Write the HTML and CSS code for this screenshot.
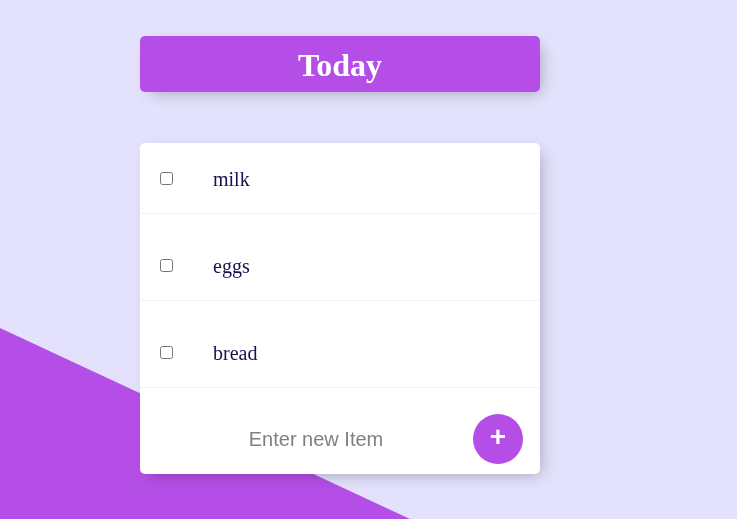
FILE: index.html
```
<!DOCTYPE html>
<html>
<head>
<meta charset="utf-8">
<link rel="stylesheet" href="styles.css">
</head>
<body>
<div class="bg-shape"></div>
<div class="page">
  <div class="box heading">
    <h1>Today</h1>
  </div>
  <div class="box list">
    <form class="item-form"><div class="item"><input type="checkbox" class="check"><p>milk</p></div></form>
    <form class="item-form"><div class="item"><input type="checkbox" class="check"><p>eggs</p></div></form>
    <form class="item-form"><div class="item"><input type="checkbox" class="check"><p>bread</p></div></form>
    <form class="item-form last"><div class="item add-row">
      <input type="text" class="new-item" placeholder="Enter new Item">
      <button type="button" class="add-btn">+</button>
    </div></form>
  </div>
</div>
</body>
</html>
```
FILE: styles.css
```
html, body {
  margin: 0;
  padding: 0;
  height: 100%;
}
body {
  background-color: #e4e1fd;
  font-family: "Liberation Serif", "Times New Roman", serif;
  overflow: hidden;
}
.bg-shape {
  position: fixed;
  left: 0;
  top: 0;
  width: 100%;
  height: 100%;
  background-color: #b54ee6;
  clip-path: polygon(0 328px, 410px 519px, 0 519px);
  z-index: 0;
}
.page {
  position: relative;
  z-index: 1;
  padding-top: 36px;
  padding-left: 140px;
}
.box {
  width: 400px;
  background: #ffffff;
  border-radius: 5px;
  box-shadow: 5px 5px 15px -5px rgba(0, 0, 0, 0.3);
}
.heading {
  background-color: #b54ee6;
  height: 56px;
  display: flex;
  align-items: center;
  justify-content: center;
}
.heading h1 {
  margin: 0;
  color: #ffffff;
  font-size: 32px;
  font-weight: bold;
  line-height: 1;
  padding-top: 1px;
}
.list {
  margin-top: 51px;
}
.item-form {
  margin: 0 0 16px 0;
}
.item-form.last {
  margin-bottom: 0;
}
.item {
  min-height: 70px;
  display: flex;
  align-items: center;
  border-bottom: 1px solid #f1f1f1;
}
.add-row {
  border-bottom: none;
}
.check {
  margin: 0 20px;
  width: 13px;
  height: 13px;
}
.item p {
  margin: 0;
  padding: 2px 20px 0 20px;
  font-size: 20px;
  color: #1a1050;
}
.new-item {
  width: 323px;
  height: 60px;
  box-sizing: border-box;
  padding: 0 10px 0 39px;
  border: none;
  outline: none;
  text-align: center;
  font-family: "Liberation Sans", Arial, sans-serif;
  font-size: 20px;
  color: #333;
  background: transparent;
}
.new-item::placeholder {
  color: #808080;
}
.add-btn {
  margin-left: 10px;
  width: 50px;
  height: 50px;
  border-radius: 50%;
  border: none;
  background-color: #b54ee6;
  color: #ffffff;
  font-family: "Liberation Sans", Arial, sans-serif;
  font-size: 28px;
  font-weight: bold;
  line-height: 1;
  padding: 0 0 5px 0;
  cursor: pointer;
}
```
